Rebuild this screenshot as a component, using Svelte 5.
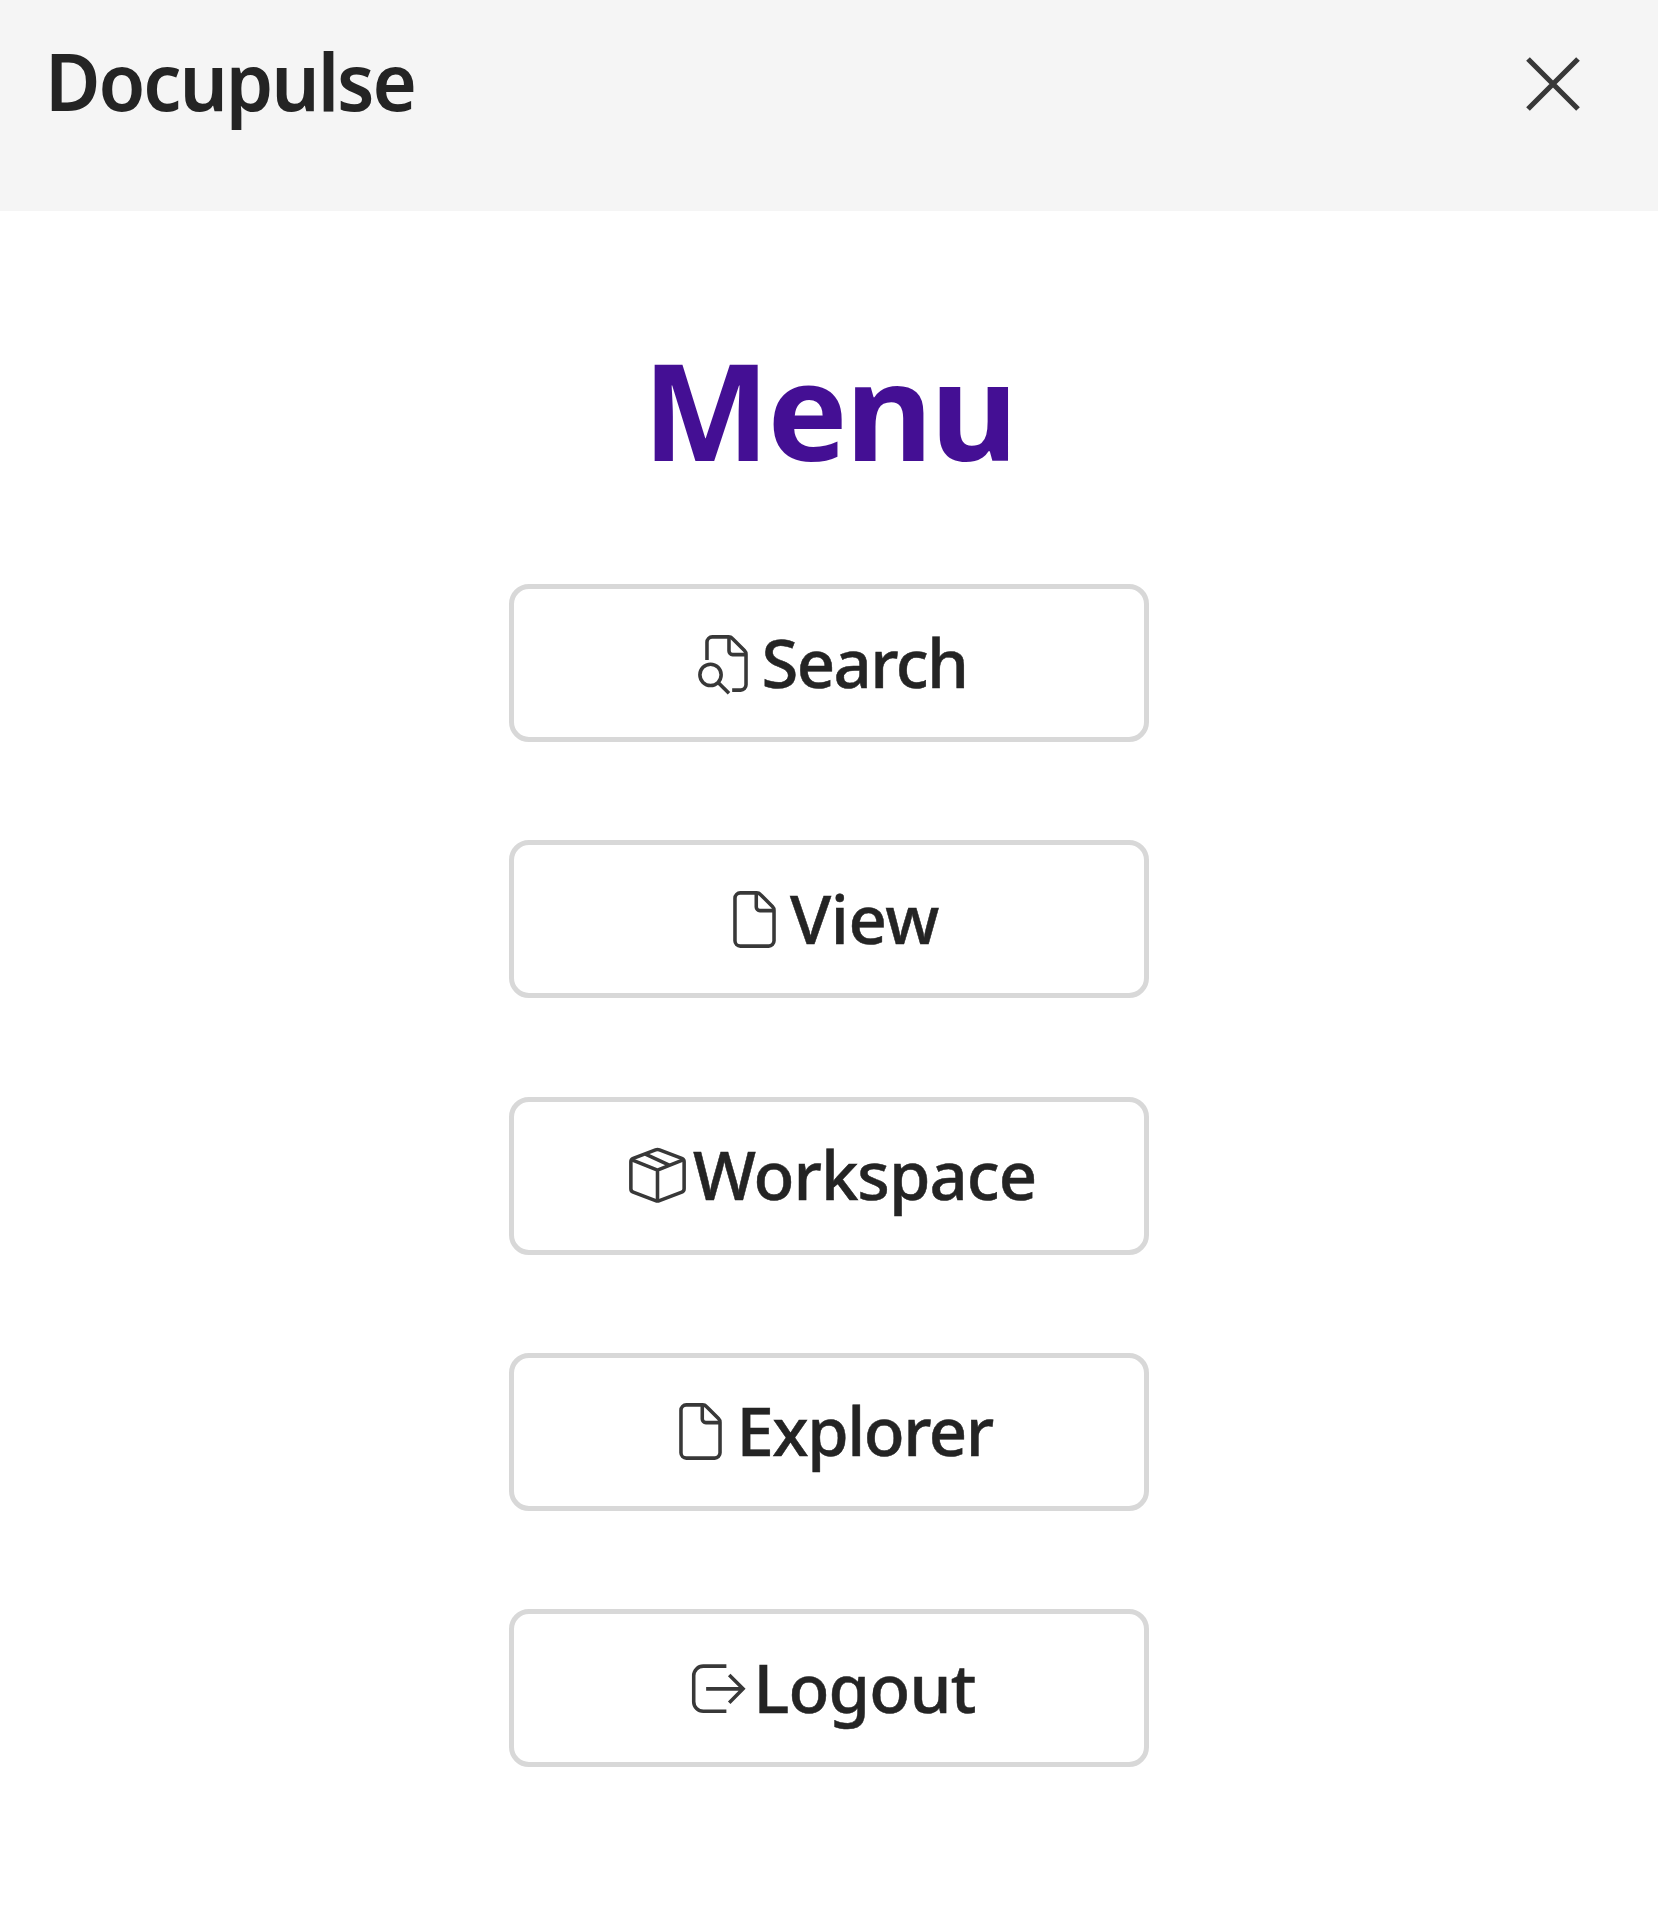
<script>
  const items = [
    { label: 'Search', icon: 'search', tracking: -1.6 },
    { label: 'View', icon: 'document', tracking: -0.4 },
    { label: 'Workspace', icon: 'box', tracking: -1 },
    { label: 'Explorer', icon: 'document', tracking: -1.5 },
    { label: 'Logout', icon: 'exit', tracking: -0.8 }
  ];
</script>

<div class="pane">
  <header>
    <h1>Docupulse</h1>
    <button class="close" aria-label="Close">
      <svg viewBox="0 0 54 54"><path d="M2 2 52 52M52 2 2 52" /></svg>
    </button>
  </header>

  <main>
    <h2>Menu</h2>
    <nav>
      {#each items as item}
        <button class="item">
          <svg class="icon" viewBox="0 0 20 20" aria-hidden="true">
            {#if item.icon === 'search'}
              <path d="M4.5 9V4A1.5 1.5 0 0 1 6 2.5h4.6c.4 0 .8.16 1.06.44l3.4 3.4c.28.28.44.66.44 1.06V16a1.5 1.5 0 0 1-1.5 1.5h-2.4" />
              <path d="M10.7 2.5v4a1 1 0 0 0 1 1h3.8" />
              <circle cx="5.5" cy="13.2" r="3" />
              <path d="m7.7 15.4 3 3" />
            {:else if item.icon === 'document'}
              <path d="M6 2.5h4.6c.4 0 .8.16 1.06.44l3.4 3.4c.28.28.44.66.44 1.06V16a1.5 1.5 0 0 1-1.5 1.5H6A1.5 1.5 0 0 1 4.5 16V4A1.5 1.5 0 0 1 6 2.5z" />
              <path d="M10.5 2.5v4a1 1 0 0 0 1 1h4" />
            {:else if item.icon === 'box'}
              <path d="M9.45 2.8a1.5 1.5 0 0 1 1.1 0l6.3 2.4a1 1 0 0 1 .65.95v7.6a1 1 0 0 1-.65.95l-6.3 2.4a1.5 1.5 0 0 1-1.1 0l-6.3-2.4a1 1 0 0 1-.65-.95v-7.6a1 1 0 0 1 .65-.95z" />
              <path d="M2.8 5.6 10 8.5l7.2-2.9M10 8.5v8.6M6.6 4l6.7 3.1" />
            {:else}
              <path d="M12.5 3.7H6A2.7 2.7 0 0 0 3.3 6.4v7.3A2.7 2.7 0 0 0 6 16.4h6.5" />
              <path d="M6.8 10.1h10.3M13.3 6.2l3.9 3.9-3.9 3.9" />
            {/if}
          </svg>
          <span style="letter-spacing: {item.tracking}px">{item.label}</span>
        </button>
      {/each}
    </nav>
  </main>
</div>

<style>
  :global(body) {
    margin: 0;
    background: #fff;
  }
  .pane {
    min-height: 1931px;
    font-family: 'Noto Sans', 'Open Sans', sans-serif;
    color: #242424;
  }
  header {
    box-sizing: border-box;
    height: 211px;
    padding: 25px 78px 0 45px;
    display: flex;
    justify-content: space-between;
    align-items: flex-start;
    background: #f5f5f5;
  }
  h1 {
    margin: 0;
    font-size: 80px;
    line-height: 109px;
    font-weight: 600;
    letter-spacing: -2.2px;
    transform: scaleX(0.95);
    transform-origin: left;
  }
  button {
    font: inherit;
    color: inherit;
    background: none;
  }
  .close {
    margin: 32px 0 0;
    padding: 0;
    border: 0;
    width: 54px;
    height: 54px;
  }
  svg {
    display: block;
    fill: none;
    stroke: #383838;
  }
  .close svg {
    width: 54px;
    height: 54px;
    stroke-width: 5.2;
  }
  main {
    display: flex;
    flex-direction: column;
    align-items: center;
    padding-top: 106px;
  }
  h2 {
    margin: 0 0 83px;
    font-size: 135px;
    line-height: 184px;
    font-weight: 700;
    letter-spacing: -2.6px;
    color: #440f94;
  }
  nav {
    display: grid;
    gap: 98.3px;
  }
  .item {
    box-sizing: border-box;
    width: 640px;
    height: 158px;
    padding: 0;
    display: flex;
    justify-content: center;
    align-items: center;
    border: 5px solid #d8d8d8;
    border-radius: 20px;
    font-size: 67px;
    font-weight: 500;
    line-height: 90px;
  }
  .icon {
    width: 71px;
    height: 71px;
    stroke-width: 1;
  }
  .item span {
    padding-bottom: 3px;
    -webkit-text-stroke: 0.5px currentColor;
  }
</style>
